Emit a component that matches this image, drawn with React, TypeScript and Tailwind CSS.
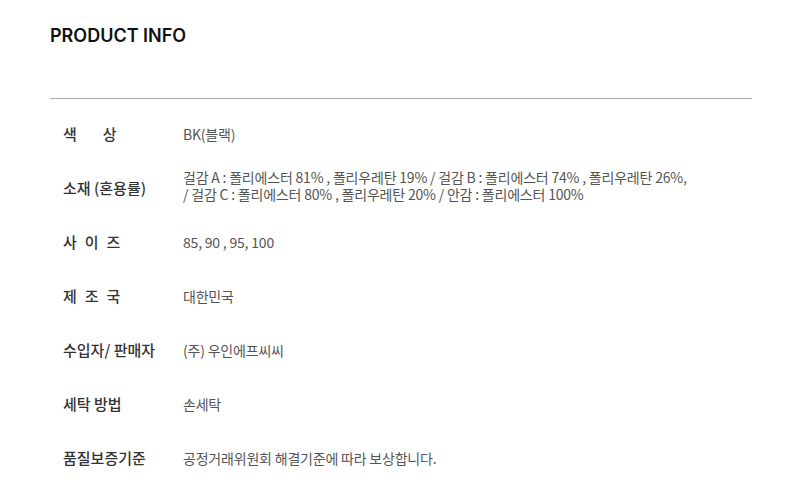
import React from "react";

const rows: { label: React.ReactNode; value: React.ReactNode; two?: boolean }[] = [
  { label: <span className="tracking-[26px]">색상</span>, value: "BK(블랙)" },
  {
    label: "소재 (혼용률)",
    two: true,
    value: (
      <>
        걸감 A : 폴리에스터 81% , 폴리우레탄 19% / 걸감 B : 폴리에스터 74% , 폴리우레탄 26%,
        <br />/ 걸감 C : 폴리에스터 80% , 폴리우레탄 20% / 안감 : 폴리에스터 100%
      </>
    ),
  },
  { label: <span className="tracking-[8px]">사이즈</span>, value: "85, 90 , 95, 100" },
  { label: <span className="tracking-[8px]">제조국</span>, value: "대한민국" },
  { label: "수입자/ 판매자", value: "(주) 우인에프씨씨" },
  { label: "세탁 방법", value: "손세탁" },
  { label: "품질보증기준", value: "공정거래위원회 해결기준에 따라 보상합니다." },
];

export default function App() {
  return (
    <div
      className="w-[800px] h-[500px] bg-white overflow-hidden"
      style={{ fontFamily: '"Noto Sans CJK KR", "Noto Sans", sans-serif' }}
    >
      <div className="px-[50px] pt-[24px]">
        <h2
          className="text-[18px] leading-[24px] font-semibold text-[#111]"
          style={{ fontFamily: 'Inter, "Noto Sans CJK KR", sans-serif' }}
        >
          PRODUCT INFO
        </h2>
        <div className="mt-[50px] h-px w-[702px] bg-[#aaa]" />
        <div className="pt-[8px] flex flex-col">
          {rows.map((r, i) => (
            <div key={i} className="flex items-center h-[54px]">
              <div className="w-[133px] pl-[13px] text-[15px] font-medium text-[#333] whitespace-nowrap">
                {r.label}
              </div>
              <div
                className={
                  r.two
                    ? "text-[14px] leading-[17px] text-[#555] font-normal tracking-[-0.2px] -mt-[4px]"
                    : "text-[14px] leading-[18px] text-[#555] font-normal tracking-[-0.2px]"
                }
              >
                {r.value}
              </div>
            </div>
          ))}
        </div>
      </div>
    </div>
  );
}
